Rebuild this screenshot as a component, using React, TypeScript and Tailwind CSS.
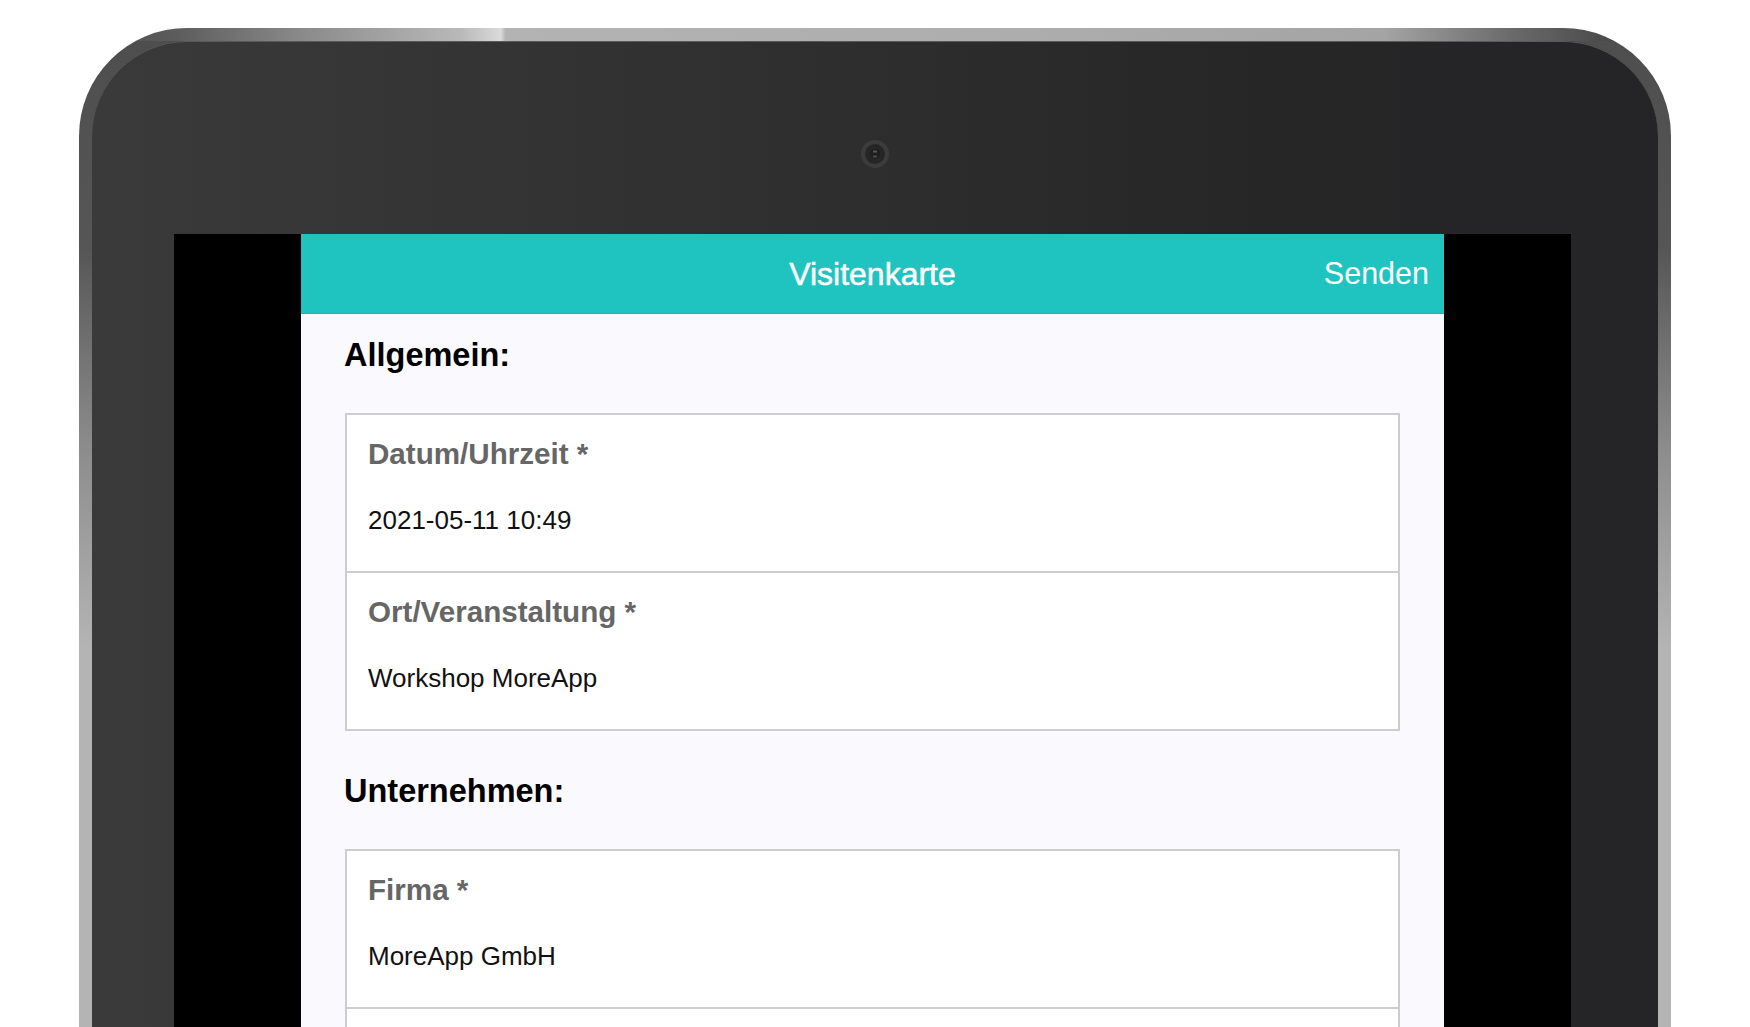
import React from "react";

type Field = { label: string; value: string };

const general: Field[] = [
  { label: "Datum/Uhrzeit *", value: "2021-05-11 10:49" },
  { label: "Ort/Veranstaltung *", value: "Workshop MoreApp" },
];

const company: Field[] = [{ label: "Firma *", value: "MoreApp GmbH" }];

function FieldCard({ fields, more = false }: { fields: Field[]; more?: boolean }) {
  return (
    <div className="border-2 border-[#cdcdcd] bg-white divide-y-2 divide-[#cdcdcd]">
      {fields.map((f) => (
        <div key={f.label} className="px-[20px] pt-[22px] pb-[36px]">
          <div className="text-[29.6px] leading-[34px] font-bold text-[#666666] pl-[1px]">{f.label}</div>
          <div className="mt-[34px] text-[26px] leading-[30px] text-[#111111] pl-[1px]">{f.value}</div>
        </div>
      ))}
      {/* next field continues below the fold */}
      {more && <div className="h-[156px]" />}
    </div>
  );
}

function Camera() {
  return (
    <svg width="30" height="30" viewBox="0 0 30 30">
      <circle cx="15" cy="15" r="12" fill="#262626" stroke="#3c3c3c" strokeWidth="4" />
      <circle cx="15" cy="15" r="5" fill="#1f1f1f" />
      <rect x="13" y="11.5" width="4" height="2" rx="0.5" fill="#555" />
      <rect x="13" y="16.5" width="4" height="2" rx="0.5" fill="#4a4a4a" />
    </svg>
  );
}

export default function App() {
  return (
    <div className="h-[1027px] overflow-hidden bg-white font-['Liberation_Sans',Arial,sans-serif]">
      {/* tablet frame */}
      <div className="ml-[79px] mt-[28px] w-[1592px] h-[1120px] rounded-t-[108px] pt-[13px] px-[13px] bg-[linear-gradient(180deg,transparent_0,transparent_13px,#4e4e4e_13px,#565656_220px,#8c8c8c_420px,#b4b4b4_620px),linear-gradient(90deg,#4a4a4a_0%,#5c5c5c_6%,#8a8a8a_14%,#b9b9b9_24%,#dadada_26.5%,#b3b3b3_26.8%,#adadad_60%,#a4a4a4_82%,#6a6a6a_90%,#4a4a4a_96%)]">
        <div className="h-full rounded-t-[95px] flex flex-col bg-[linear-gradient(90deg,#3a3a3a_0%,#2f2f2f_45%,#262627_75%,#252527_100%)] shadow-[inset_0_1px_0_#5a5a5a]">
          <div className="pt-[98px] flex justify-center">
            <Camera />
          </div>

          {/* screen */}
          <div className="mt-[65px] ml-[82px] mr-[87px] flex-1 bg-black flex justify-center">
            <div className="w-[1143px] bg-[#fafafe] flex flex-col">
              <div className="h-[80px] shrink-0 bg-[#1fc4c1] border-b border-[#17b8b6] grid grid-cols-[1fr_auto_1fr] items-center text-white">
                <div />
                <div className="text-[32px] leading-none [-webkit-text-stroke:0.5px_white]">Visitenkarte</div>
                <div className="text-right pr-[15px] text-[30.5px] leading-none">Senden</div>
              </div>

              <div className="px-[44px] pt-[23px]">
                <h2 className="-ml-[1px] text-[32.5px] leading-[36px] font-bold text-black">Allgemein:</h2>
                <div className="mt-[40px]">
                  <FieldCard fields={general} />
                </div>

                <h2 className="-ml-[1px] mt-[42px] text-[32.5px] leading-[36px] font-bold text-black">Unternehmen:</h2>
                <div className="mt-[40px]">
                  <FieldCard fields={company} more />
                </div>
              </div>
            </div>
          </div>
        </div>
      </div>
    </div>
  );
}
